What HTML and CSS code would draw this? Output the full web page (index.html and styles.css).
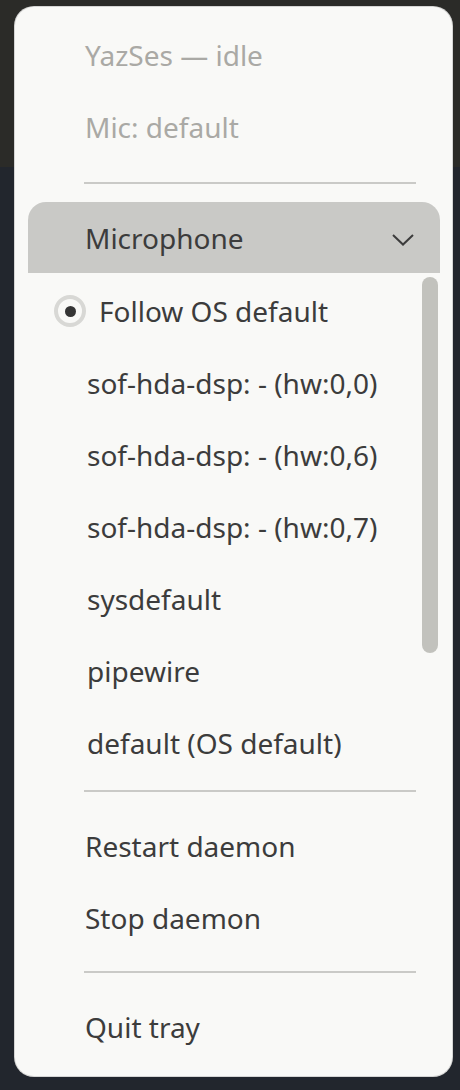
FILE: index.html
```html
<!DOCTYPE html>
<html>
<head>
<meta charset="utf-8">
<link rel="stylesheet" href="styles.css">
</head>
<body>
<div class="popover">
  <div class="item disabled">YazSes — idle</div>
  <div class="item disabled">Mic: default</div>
  <div class="sep sep-a"></div>
  <div class="submenu">
    <div class="sub-header">
      <span>Microphone</span>
      <svg class="chevron" width="22" height="12" viewBox="0 0 22 12"><path d="M1 1 L11 10.5 L21 1" fill="none" stroke="#3c3c3c" stroke-width="2"/></svg>
    </div>
    <div class="sub-list">
      <div class="sub-item radio-item"><span class="radio"></span>Follow OS default</div>
      <div class="sub-item">sof-hda-dsp: - (hw:0,0)</div>
      <div class="sub-item">sof-hda-dsp: - (hw:0,6)</div>
      <div class="sub-item">sof-hda-dsp: - (hw:0,7)</div>
      <div class="sub-item">sysdefault</div>
      <div class="sub-item">pipewire</div>
      <div class="sub-item">default (OS default)</div>
      <div class="scrollbar"></div>
    </div>
  </div>
  <div class="sep sep-b"></div>
  <div class="item">Restart daemon</div>
  <div class="item">Stop daemon</div>
  <div class="sep sep-c"></div>
  <div class="item">Quit tray</div>
</div>
</body>
</html>
```
FILE: styles.css
```css
html, body {
  margin: 0;
  padding: 0;
}
body {
  width: 460px;
  height: 1090px;
  overflow: hidden;
  background: linear-gradient(to bottom, #2b2b28 0, #2b2b28 167px, #22262d 167px, #22262d 100%);
  font-family: "Noto Sans", "Open Sans", sans-serif;
  font-size: 28px;
  color: #3c3c3c;
}
.popover {
  box-sizing: border-box;
  margin: 6px 0 0 14px;
  width: 439px;
  height: 1071px;
  background: #f9f9f7;
  border: 1px solid rgba(0, 0, 0, 0.14);
  border-radius: 20px;
  padding: 12px 0 0 0;
}
.item {
  height: 72px;
  display: flex;
  align-items: center;
  padding-left: 70px;
  white-space: nowrap;
}
.item.disabled {
  color: #aaa9a5;
}
.sep {
  height: 2px;
  background: #cacac7;
  margin-left: 69px;
  margin-right: 36px;
}
.sep-a { margin-top: 19px; margin-bottom: 18px; }
.sep-b { margin-top: 11px; margin-bottom: 18px; }
.sep-c { margin-top: 17px; margin-bottom: 18px; }
.sub-header {
  height: 71px;
  margin: 0 12px 0 13px;
  background: #c9c9c6;
  border-radius: 18px 18px 0 0;
  display: flex;
  align-items: center;
  justify-content: space-between;
  padding: 0 26px 0 57px;
}
.chevron {
  display: block;
  margin-top: 4px;
}
.sub-list {
  position: relative;
  padding-top: 2px;
}
.sub-item {
  height: 72px;
  display: flex;
  align-items: center;
  padding-left: 72px;
  white-space: nowrap;
}
.sub-item.radio-item {
  padding-left: 39px;
}
.radio {
  box-sizing: border-box;
  width: 32px;
  height: 32px;
  border-radius: 50%;
  border: 4px solid #d8d8d5;
  background: #f9f9f7;
  margin-right: 13px;
  display: flex;
  align-items: center;
  justify-content: center;
}
.radio::after {
  content: "";
  width: 11px;
  height: 11px;
  border-radius: 50%;
  background: #353535;
}
.scrollbar {
  position: absolute;
  top: 4px;
  right: 14px;
  width: 16px;
  height: 376px;
  border-radius: 8px;
  background: #c2c2bd;
}
```
